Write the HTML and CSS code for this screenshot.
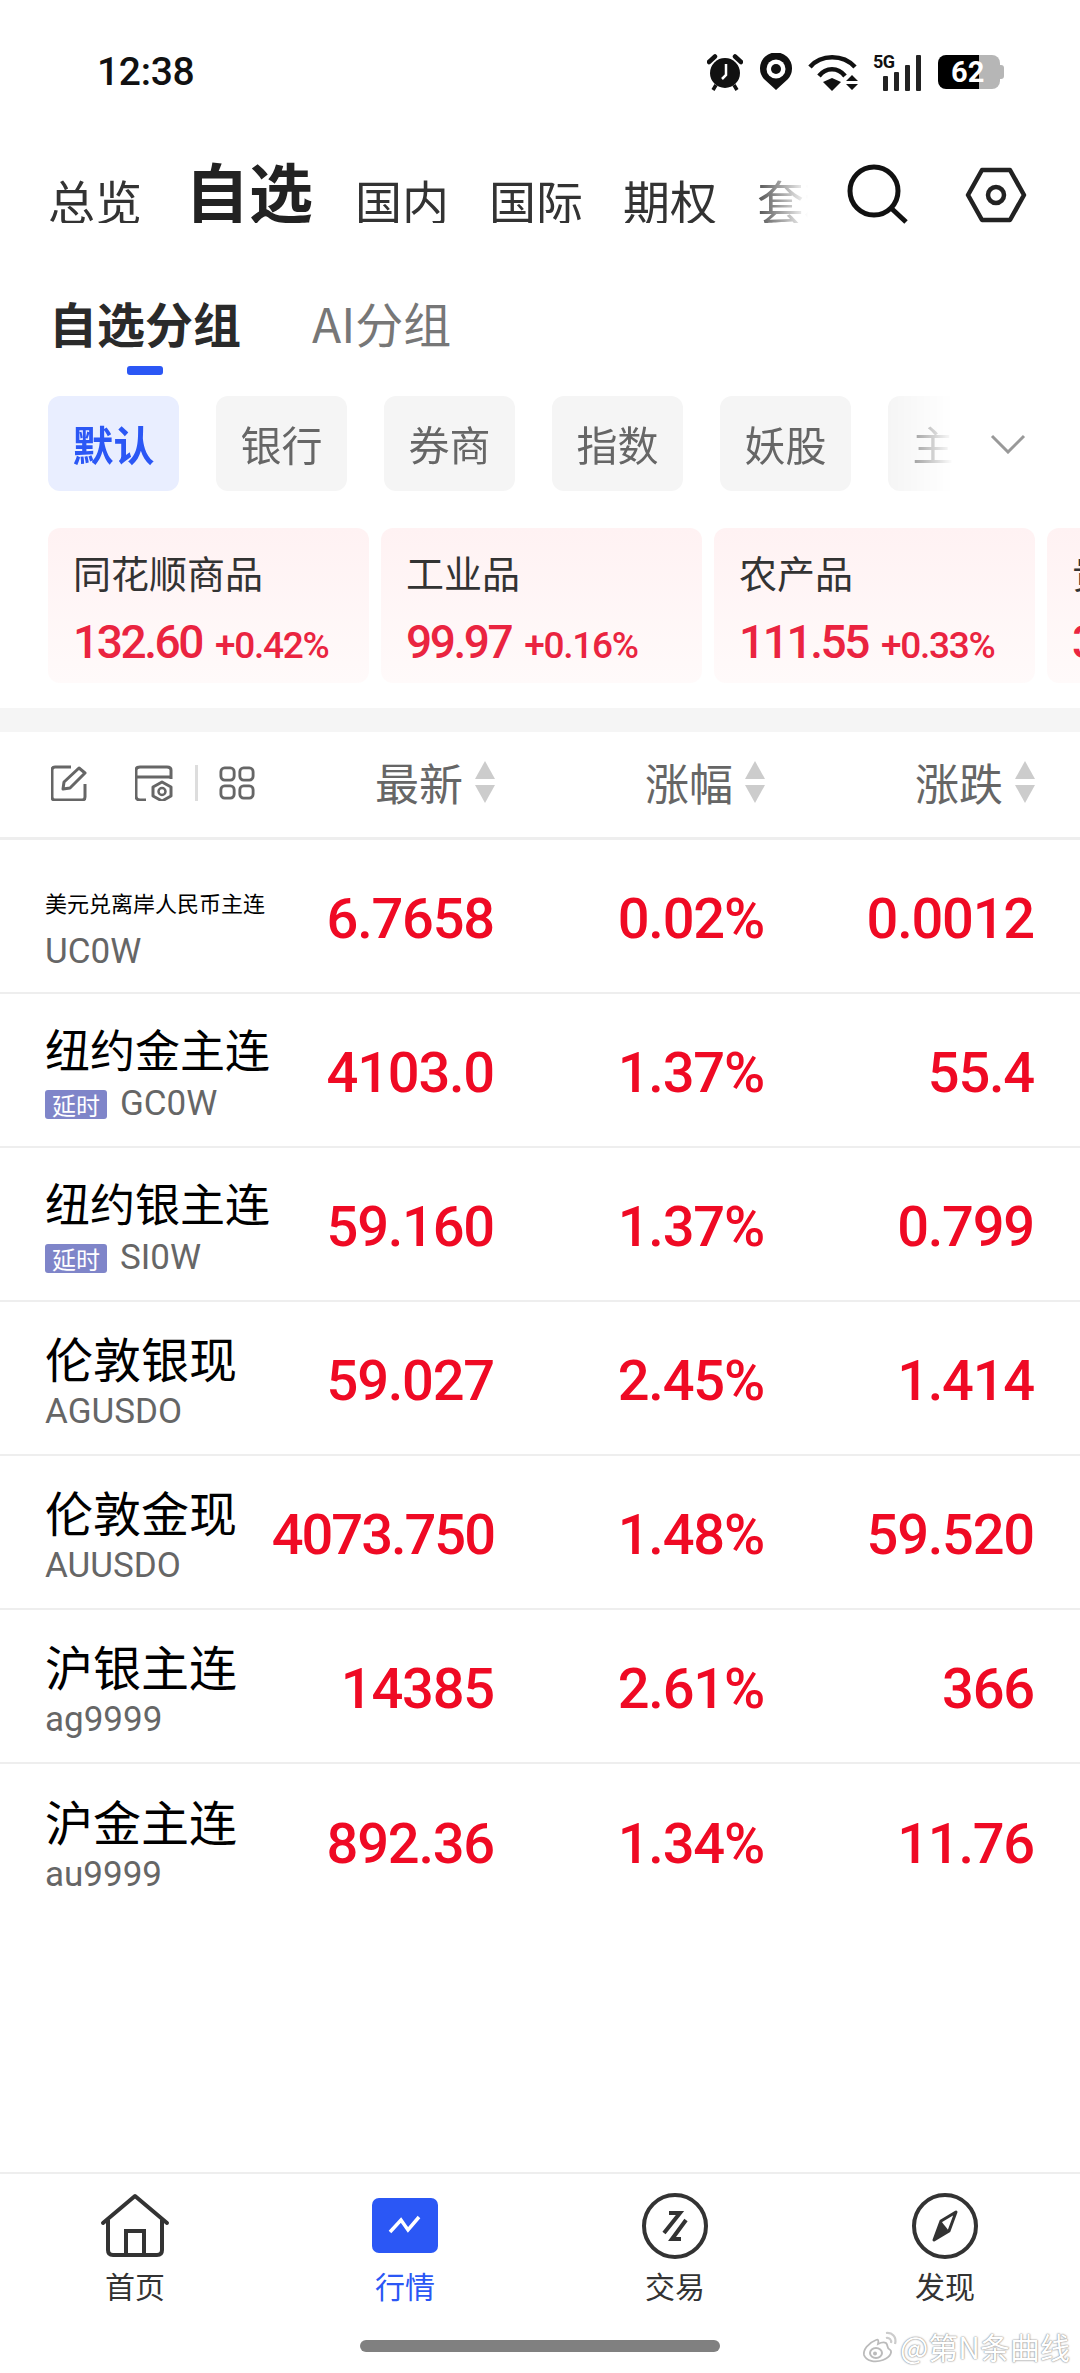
FILE: index.html
```html
<!DOCTYPE html>
<html lang="zh-CN">
<head>
<meta charset="utf-8">
<title>自选</title>
<link rel="stylesheet" href="styles.css">
</head>
<body>
<div class="page">
  <header class="status">
    <span class="time">12:38</span>
    <div class="status-icons">
      <svg class="i-alarm" viewBox="0 0 36 38"><circle cx="18" cy="20" r="15" fill="#111"/><path d="M2 9 8 3.500M34 9 28 3.500" stroke="#111" stroke-width="4.500" stroke-linecap="round"/><path d="M9 32 6 37M27 32l3 5" stroke="#111" stroke-width="3.500"/><path d="M19 11v11l-4 4" stroke="#fff" stroke-width="2.500" fill="none"/></svg>
      <svg class="i-pin" viewBox="0 0 32 38"><path d="M16 37 4 26A16 16 0 1 1 28 26Z" fill="#111"/><circle cx="16" cy="16" r="9.500" fill="#fff"/><circle cx="16" cy="16" r="5" fill="#111"/></svg>
      <svg class="i-wifi" viewBox="0 0 50 37"><path d="M2 13C13 0 35 0 47 13M11 22C18 13 30 13 37 22" fill="none" stroke="#111" stroke-width="4.500"/><path d="M15 28 24 24 33 28 24 37Z" fill="#111"/><path d="M44 21l6 6H38ZM38 30h12l-6 6Z" fill="#111"/></svg>
      <div class="signal"><span class="fiveg">5G</span><div class="bars"><i class="b1"></i><i class="b2"></i><i class="b3"></i><i class="b4"></i></div></div>
      <div class="battery"><span class="batt-num">62</span><i class="batt-nub"></i></div>
    </div>
  </header>

  <nav class="top-tabs">
    <div class="tab-scroll">
      <span class="tab">总览</span>
      <span class="tab tab-on">自选</span>
      <span class="tab">国内</span>
      <span class="tab">国际</span>
      <span class="tab">期权</span>
      <span class="tab">套利</span>
    </div>
    <svg class="i-search" viewBox="0 0 62 60"><circle cx="28" cy="27" r="24" fill="none" stroke="#111" stroke-width="5"/><path d="M45 44 60 58" stroke="#111" stroke-width="5"/></svg>
    <svg class="i-hex" viewBox="0 0 62 56"><path d="M17 3H45L59 28 45 53H17L3 28Z" fill="none" stroke="#222" stroke-width="4.500" stroke-linejoin="round"/><circle cx="31" cy="28" r="8" fill="none" stroke="#222" stroke-width="4.500"/></svg>
  </nav>

  <div class="sub-tabs">
    <div class="sub-on">自选分组<div class="indicator"></div></div>
    <div class="sub-off">AI分组</div>
  </div>

  <div class="chips">
    <div class="chip-scroll">
      <span class="chip chip-on">默认</span>
      <span class="chip">银行</span>
      <span class="chip">券商</span>
      <span class="chip">指数</span>
      <span class="chip">妖股</span>
      <span class="chip">主连</span>
    </div>
    <svg class="i-chev" viewBox="0 0 36 20"><path d="M2 2 18 18 34 2" fill="none" stroke="#999" stroke-width="3"/></svg>
  </div>

  <div class="cards">
    <div class="card"><div class="card-name">同花顺商品</div><div class="card-vals"><span class="card-num">132.60</span><span class="card-pct">+0.42%</span></div></div>
    <div class="card"><div class="card-name">工业品</div><div class="card-vals"><span class="card-num">99.97</span><span class="card-pct">+0.16%</span></div></div>
    <div class="card"><div class="card-name">农产品</div><div class="card-vals"><span class="card-num">111.55</span><span class="card-pct">+0.33%</span></div></div>
    <div class="card"><div class="card-name">贵金属</div><div class="card-vals"><span class="card-num">312.80</span><span class="card-pct">+1.20%</span></div></div>
  </div>

  <div class="band"></div>

  <div class="thead">
    <div class="tools">
      <svg class="i-tool" viewBox="0 0 36 36"><path d="M20 2H4Q1 2 1 5V32Q1 35 4 35H31Q34 35 34 32V19" fill="none" stroke="#666" stroke-width="3"/><path d="M12 24 13 17 28 3 34 8 19 23Z" fill="none" stroke="#666" stroke-width="3" stroke-linejoin="round"/></svg>
      <svg class="i-tool i-tool2" viewBox="0 0 38 36"><path d="M11 35H5Q1 35 1 31V5Q1 2 5 2H32Q36 2 36 5V14M1 12H36" fill="none" stroke="#666" stroke-width="3"/><path d="M27 17 36 22V31L27 36 18 31V22Z" fill="none" stroke="#666" stroke-width="3" stroke-linejoin="round"/><circle cx="27" cy="26.500" r="3.500" fill="none" stroke="#666" stroke-width="2.500"/></svg>
      <i class="tool-sep"></i>
      <svg class="i-tool" viewBox="0 0 38 36"><g fill="none" stroke="#666" stroke-width="3"><rect x="2" y="2" width="14" height="13" rx="4"/><rect x="22" y="2" width="14" height="13" rx="4"/><rect x="2" y="21" width="14" height="13" rx="4"/><rect x="22" y="21" width="14" height="13" rx="4"/></g></svg>
    </div>
    <div class="th">最新<span class="sort"><i class="up"></i><i class="down"></i></span></div>
    <div class="th">涨幅<span class="sort"><i class="up"></i><i class="down"></i></span></div>
    <div class="th">涨跌<span class="sort"><i class="up"></i><i class="down"></i></span></div>
  </div>

  <div class="row">
    <div class="name"><div class="title title-small">美元兑离岸人民币主连</div><div class="code">UC0W</div></div>
    <div class="val">6.7658</div><div class="val">0.02%</div><div class="val">0.0012</div>
  </div>
  <div class="row">
    <div class="name"><div class="title">纽约金主连</div><div class="code"><span class="delay">延时</span>GC0W</div></div>
    <div class="val">4103.0</div><div class="val">1.37%</div><div class="val">55.4</div>
  </div>
  <div class="row">
    <div class="name"><div class="title">纽约银主连</div><div class="code"><span class="delay">延时</span>SI0W</div></div>
    <div class="val">59.160</div><div class="val">1.37%</div><div class="val">0.799</div>
  </div>
  <div class="row">
    <div class="name"><div class="title title-big">伦敦银现</div><div class="code">AGUSDO</div></div>
    <div class="val">59.027</div><div class="val">2.45%</div><div class="val">1.414</div>
  </div>
  <div class="row">
    <div class="name"><div class="title title-big">伦敦金现</div><div class="code">AUUSDO</div></div>
    <div class="val val-long">4073.750</div><div class="val">1.48%</div><div class="val">59.520</div>
  </div>
  <div class="row">
    <div class="name"><div class="title title-big">沪银主连</div><div class="code">ag9999</div></div>
    <div class="val">14385</div><div class="val">2.61%</div><div class="val">366</div>
  </div>
  <div class="row row-last">
    <div class="name"><div class="title title-big">沪金主连</div><div class="code">au9999</div></div>
    <div class="val">892.36</div><div class="val">1.34%</div><div class="val">11.76</div>
  </div>

  <div class="spacer"></div>

  <nav class="bottom">
    <div class="nav-item">
      <svg class="nav-icon" viewBox="0 0 72 66"><path d="M4 30 36 3 68 30" fill="none" stroke="#333" stroke-width="4" stroke-linejoin="round" stroke-linecap="round"/><path d="M9 27V57Q9 62 14 62H58Q63 62 63 57V27" fill="none" stroke="#333" stroke-width="4"/><path d="M27 62V38H45V62" fill="none" stroke="#333" stroke-width="4"/></svg>
      <span class="nav-label">首页</span>
    </div>
    <div class="nav-item nav-on">
      <svg class="nav-icon" viewBox="0 0 72 66"><rect x="3" y="5" width="66" height="55" rx="7" fill="#2b57f5"/><path d="M21 39 32 27 39 37 50 24" fill="none" stroke="#fff" stroke-width="3.500"/></svg>
      <span class="nav-label">行情</span>
    </div>
    <div class="nav-item">
      <svg class="nav-icon" viewBox="0 0 72 66"><circle cx="36" cy="33" r="31" fill="none" stroke="#333" stroke-width="4"/><path d="M30 20H41L25 40" fill="none" stroke="#333" stroke-width="4"/><path d="M47 27 33 46H42" fill="none" stroke="#333" stroke-width="4"/></svg>
      <span class="nav-label">交易</span>
    </div>
    <div class="nav-item">
      <svg class="nav-icon" viewBox="0 0 72 66"><circle cx="36" cy="33" r="31" fill="none" stroke="#333" stroke-width="4"/><path d="M47 19 40 38 25 47 32 28Z" fill="none" stroke="#333" stroke-width="3" stroke-linejoin="round"/><path d="M40 38 25 47 32 28Z" fill="#333"/></svg>
      <span class="nav-label">发现</span>
    </div>
  </nav>
  <div class="home-wrap"><div class="home-bar"></div></div>

  <div class="watermark">
    <svg class="i-weibo" viewBox="0 0 36 36"><path d="M14 12C6 15 1 22 2 27 4 33 13 35 21 32 29 29 31 23 27 21 25 20 26 17 24 15 22 14 18 15 16 16 17 12 16 11 14 12Z" fill="#fff" stroke="#bbb" stroke-width="1.800"/><ellipse cx="14" cy="25" rx="6" ry="5" fill="#fff" stroke="#bbb" stroke-width="2"/><circle cx="13" cy="25.500" r="2" fill="#bbb"/><path d="M24 5C30 4 35 9 33 16M24 10C27 9 30 12 29 15" fill="none" stroke="#ccc" stroke-width="2.200"/></svg>
    <span>@第N条曲线</span>
  </div>
</div>
</body>
</html>
```
FILE: styles.css
```css
* { box-sizing: border-box; margin: 0; padding: 0; }
html, body { background: #fff; }
body { font-family: "Noto Sans CJK SC", "Noto Sans", sans-serif; color: #222; }
svg { display: block; flex: none; }
i { display: block; font-style: normal; }

.page { position: relative; width: 1080px; height: 2373px; overflow: hidden; display: flex; flex-direction: column; background: #fff; }

/* status bar */
.status { height: 91px; padding: 53px 76px 0 97px; display: flex; justify-content: space-between; align-items: center; flex: none; }
.time { font-family: Roboto, sans-serif; font-size: 39px; font-weight: 500; color: #111; line-height: 38px; letter-spacing: -.3px; }
.status-icons { display: flex; align-items: center; }
.i-alarm { width: 36px; height: 38px; margin-right: 17px; }
.i-pin { width: 32px; height: 38px; margin-right: 16px; }
.i-wifi { width: 50px; height: 37px; margin-right: 15px; }
.signal { position: relative; width: 48px; height: 37px; margin-right: 17px; }
.fiveg { position: absolute; left: 0; top: -2px; font: 700 18px/20px Roboto, sans-serif; letter-spacing: -.5px; color: #111; }
.bars { position: absolute; right: 0; bottom: 0; display: flex; align-items: flex-end; gap: 6px; }
.bars i { width: 5px; background: #222; border-radius: 1px; }
.b1 { height: 15px; } .b2 { height: 19px; } .b3 { height: 26px; } .b4 { height: 36px; }
.battery { position: relative; width: 62px; height: 34px; margin-right: 4px; border-radius: 8px; background: linear-gradient(90deg, #000 0 41px, #b6b6b6 41px); display: flex; align-items: center; padding-left: 13px; }
.batt-nub { position: absolute; right: -4px; top: 10px; width: 4px; height: 14px; border-radius: 0 3px 3px 0; background: #b6b6b6; }
.batt-num { font: 700 29px/34px Roboto, sans-serif; color: #fff; }

/* top tabs */
.top-tabs { height: 132px; flex: none; display: flex; align-items: flex-end; padding-left: 48px; position: relative; }
.tab-scroll { width: 767px; display: flex; align-items: flex-end; gap: 40px; flex: none; -webkit-mask-image: linear-gradient(90deg, #000 0 700px, rgba(0,0,0,.5) 730px, transparent 760px); mask-image: linear-gradient(90deg, #000 0 700px, rgba(0,0,0,.5) 730px, transparent 760px); }
.tab { font-size: 47px; line-height: 47px; color: #333; white-space: nowrap; flex: none; }
.tab-on { font-size: 64px; line-height: 64px; font-weight: 700; color: #222; margin: 0 2px 2px 3px; }
.i-search { width: 62px; height: 60px; margin: 0 0 -1px 31px; }
.i-hex { width: 62px; height: 56px; margin: 0 0 0 57px; }

/* sub tabs */
.sub-tabs { display: flex; gap: 71px; padding: 76px 0 0 49px; flex: none; height: 151px; }
.sub-on { font-size: 48px; line-height: 47px; font-weight: 700; color: #2a2a2a; }
.sub-off { font-size: 48px; line-height: 47px; color: #777; }
.indicator { width: 36px; height: 9px; border-radius: 3px; background: #2b57f5; margin: 20px auto 0; }

/* chips */
.chips { height: 95px; flex: none; padding-left: 48px; display: flex; align-items: center; margin-top: 22px; }
.chip-scroll { width: 910px; display: flex; gap: 37px; flex: none; -webkit-mask-image: linear-gradient(90deg, #000 0 840px, transparent 905px); mask-image: linear-gradient(90deg, #000 0 840px, transparent 905px); }
.chip { width: 131px; height: 95px; flex: none; border-radius: 12px; background: #f5f5f5; color: #666; font-size: 41px; line-height: 95px; text-align: center; }
.chip-on { background: #e9eeff; color: #2b57f5; font-weight: 700; }
.i-chev { width: 36px; height: 20px; margin-left: 32px; }

/* cards */
.cards { display: flex; gap: 12px; padding-left: 48px; margin-top: 37px; flex: none; height: 155px; }
.card { width: 321px; flex: none; border-radius: 12px; background: linear-gradient(180deg, #fff2f3, #fffafa); padding: 21px 0 0 25px; }
.card-name { font-size: 38px; line-height: 46px; color: #333; }
.card-vals { display: flex; align-items: baseline; margin-top: 22px; }
.card-num { font: 500 46px/50px Roboto, sans-serif; color: #ea2440; letter-spacing: -2.400px; }
.card-pct { font: 500 37px/50px Roboto, sans-serif; color: #ea2440; margin-left: 13px; letter-spacing: -1.300px; }

.band { height: 24px; background: #f5f5f5; margin-top: 25px; flex: none; }

/* table */
.thead { height: 108px; flex: none; border-bottom: 3px solid #eee; display: grid; grid-template-columns: 220px 224px 270px 270px; padding-left: 51px; align-items: center; }
.tools { display: flex; align-items: center; margin-top: -3px; }
.i-tool { width: 36px; height: 36px; }
.i-tool2 { width: 38px; margin-left: 48px; }
.tool-sep { width: 3px; height: 36px; background: #ddd; margin: 0 21px 0 22px; }
.th { display: flex; justify-content: flex-end; align-items: center; font-size: 44px; line-height: 46px; color: #666; padding-bottom: 5px; }
.sort { display: flex; flex-direction: column; gap: 6px; margin-left: 12px; }
.sort .up { width: 0; height: 0; border: 10.500px solid transparent; border-top: 0; border-bottom: 18px solid #ccc; }
.sort .down { width: 0; height: 0; border: 10.500px solid transparent; border-bottom: 0; border-top: 18px solid #ccc; }

.row { height: 154px; flex: none; border-bottom: 2px solid #eee; display: grid; grid-template-columns: 205px 244px 270px 270px; padding-left: 45px; align-items: center; }
.row-last { border-bottom: 0; }
.name { display: flex; flex-direction: column; padding-top: 7px; min-width: 0; }
.title { font-size: 45px; line-height: 52px; color: #000; white-space: nowrap; }
.title-big { font-size: 48px; }
.title-small { font-size: 22px; line-height: 42px; margin-top: 14px; }
.code { font: 400 35px/40px Roboto, sans-serif; color: #666; display: flex; align-items: center; white-space: nowrap; margin-top: 9px; }
.delay { width: 62px; height: 29px; border-radius: 3px; background: #7f85c9; color: #fff; font: 400 24px/29px "Noto Sans CJK SC", sans-serif; text-align: center; margin-right: 13px; flex: none; }
.val { font: 500 56px/60px Roboto, sans-serif; color: #ef0a24; text-align: right; letter-spacing: -1.200px; white-space: nowrap; padding-top: 6px; }
.val-long { letter-spacing: -2px; }

.spacer { flex: 1; }

/* bottom nav */
.bottom { flex: none; height: 168px; border-top: 2px solid #eee; display: flex; }
.nav-item { width: 270px; display: flex; flex-direction: column; align-items: center; padding-top: 19px; }
.nav-icon { width: 72px; height: 66px; }
.nav-label { font-size: 30px; line-height: 36px; color: #333; margin-top: 8px; }
.nav-on .nav-label { color: #2b57f5; }
.home-wrap { flex: none; height: 33px; display: flex; justify-content: center; }
.home-bar { width: 360px; height: 12px; border-radius: 6px; background: #808080; }

/* watermark */
.watermark { position: absolute; right: 10px; bottom: 9px; display: flex; align-items: center; gap: 2px; font-size: 30px; line-height: 36px; color: #fff; text-shadow: 0 0 2px #888, 0 0 1px #888; }
.i-weibo { width: 36px; height: 36px; }
```
